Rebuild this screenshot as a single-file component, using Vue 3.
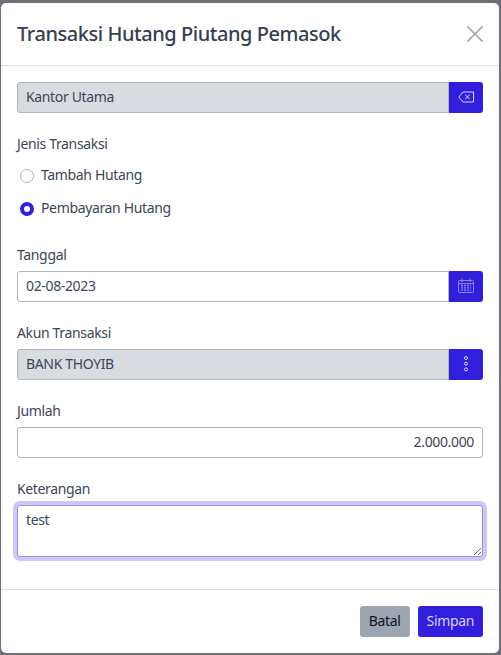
<script setup>
import { ref } from 'vue'

const jenis = ref('bayar')
const tanggal = ref('02-08-2023')
const jumlah = ref('2.000.000')
const keterangan = ref('test')
</script>

<template>
  <div class="backdrop">
    <div class="modal">
      <header class="modal-header">
        <h5 class="modal-title">Transaksi Hutang Piutang Pemasok</h5>
        <button class="btn-close" aria-label="Close">
          <svg viewBox="0 0 16 16" width="16" height="16" fill="none" stroke="currentColor" stroke-width="1.6" stroke-linecap="square">
            <path d="M1 1 L15 15 M15 1 L1 15" />
          </svg>
        </button>
      </header>

      <div class="modal-body">
        <div class="input-group group">
          <input class="form-control" value="Kantor Utama" readonly />
          <button class="btn-addon">
            <svg class="lift" viewBox="0 0 16 12" width="16" height="12" fill="none" stroke="currentColor" stroke-width="1">
              <path d="M15.5 1 H5 L0.8 6 L5 11 H15.5 Z" />
              <path d="M7.2 3.6 L11.8 8.4 M11.8 3.6 L7.2 8.4" />
            </svg>
          </button>
        </div>

        <label class="form-label">Jenis Transaksi</label>
        <div class="radios">
          <label class="radio-row">
            <input v-model="jenis" type="radio" value="tambah" />
            <span>Tambah Hutang</span>
          </label>
          <label class="radio-row">
            <input v-model="jenis" type="radio" value="bayar" />
            <span>Pembayaran Hutang</span>
          </label>
        </div>

        <label class="form-label">Tanggal</label>
        <div class="input-group group">
          <input v-model="tanggal" class="form-control editable" />
          <button class="btn-addon">
            <svg class="lift cal" viewBox="0 0 16 15" width="16" height="15" fill="none" stroke="currentColor" stroke-width="1">
              <rect x="0.5" y="2.5" width="15" height="12" rx="1" />
              <path d="M4 0.5 V4 M12 0.5 V4 M0.5 5.5 H15.5" />
              <path d="M3 7.5 H13 M3 9.8 H13 M3 12.1 H13" stroke-dasharray="2 1" stroke-width="1.3" />
            </svg>
          </button>
        </div>

        <label class="form-label">Akun Transaksi</label>
        <div class="input-group group">
          <input class="form-control" value="BANK THOYIB" readonly />
          <button class="btn-addon">
            <svg class="lift" viewBox="0 0 16 16" width="16" height="16" fill="none" stroke="currentColor" stroke-width="1">
              <circle cx="8" cy="2" r="1.5" />
              <circle cx="8" cy="7.7" r="1.5" />
              <circle cx="8" cy="13.4" r="1.5" />
            </svg>
          </button>
        </div>

        <label class="form-label">Jumlah</label>
        <div class="group">
          <input v-model="jumlah" class="form-control editable right" />
        </div>

        <label class="form-label">Keterangan</label>
        <textarea v-model="keterangan" class="form-control editable note"></textarea>
      </div>

      <footer class="modal-footer">
        <button class="btn btn-grey">Batal</button>
        <button class="btn btn-primary">Simpan</button>
      </footer>
    </div>
  </div>
</template>

<style scoped>
.backdrop {
  width: 501px;
  height: 655px;
  box-sizing: border-box;
  padding: 3px 2px 2px 1px;
  background: #6f7077;
}

.modal {
  height: 100%;
  background: #fff;
  border-radius: 5px;
  display: flex;
  flex-direction: column;
  color: #3b4656;
  font-family: "Noto Sans", "Open Sans", sans-serif;
  font-size: 14px;
  line-height: 21px;
  letter-spacing: -0.35px;
}

.modal-header {
  height: 63px;
  flex: none;
  box-sizing: border-box;
  padding: 0 16px 1px;
  display: flex;
  align-items: center;
  justify-content: space-between;
  border-bottom: 1px solid #dee2e6;
}
.modal-title {
  margin: 0;
  font-size: 20px;
  font-weight: 500;
  letter-spacing: -0.45px;
  color: #343f52;
}
.btn-close {
  width: 16px;
  height: 16px;
  padding: 0;
  border: 0;
  background: none;
  color: #a0a7ae;
  display: flex;
  align-items: center;
  justify-content: center;
}

.modal-body {
  flex: 1;
  padding: 16px 16px 0;
}

.group { margin-bottom: 21px; }
.input-group { display: flex; }

.form-label {
  display: block;
  line-height: 19px;
  margin-bottom: 7px;
}

.form-control {
  display: block;
  width: 100%;
  height: 31px;
  box-sizing: border-box;
  min-width: 0;
  flex: 1;
  padding: 0 8px 2px;
  border: 1px solid #adb5bd;
  border-radius: 3px;
  background: #d8dce0;
  color: #3b4656;
  font: inherit;
  letter-spacing: inherit;
  outline: none;
}
.input-group .form-control {
  border-top-right-radius: 0;
  border-bottom-right-radius: 0;
}
.editable { background: #fff; }
.right { text-align: right; }

.note {
  height: 52px;
  padding: 3px 8px;
  border-color: #9a90ee;
  box-shadow: 0 0 0 4px #ccc8f8;
  resize: vertical;
}

.btn-addon {
  width: 34px;
  height: 31px;
  flex: none;
  padding: 0;
  border: 0;
  border-radius: 0 3px 3px 0;
  background: #321fdb;
  color: #d6d2f8;
  display: flex;
  align-items: center;
  justify-content: center;
}
.lift { margin-bottom: 2px; }
.cal { color: #8f88e8; }

.radios {
  display: flex;
  flex-direction: column;
  gap: 12px;
  margin: 12px 0 26px;
}
.radio-row {
  display: flex;
  align-items: center;
  gap: 7px;
  padding-left: 3px;
}
.radio-row span {
  line-height: 19px;
  padding-bottom: 2px;
}
.radio-row input {
  appearance: none;
  width: 14px;
  height: 14px;
  margin: 0;
  border: 1px solid #adb5bd;
  border-radius: 50%;
  background: #fff;
}
.radio-row input:checked {
  border: 4px solid #321fdb;
}

.modal-footer {
  height: 64px;
  flex: none;
  box-sizing: border-box;
  padding: 0 16px 0 0;
  border-top: 1px solid #dee2e6;
  display: flex;
  align-items: center;
  justify-content: flex-end;
  gap: 8px;
}
.btn {
  height: 31px;
  padding: 0 9px 2px;
  border: 0;
  border-radius: 3px;
  font: inherit;
  letter-spacing: inherit;
}
.btn-grey {
  background: #9da5b1;
  color: #0f1222;
}
.btn-primary {
  background: #321fdb;
  color: #d6d2f8;
}
</style>

<style>
body { margin: 0; background: #6f7077; }
</style>
